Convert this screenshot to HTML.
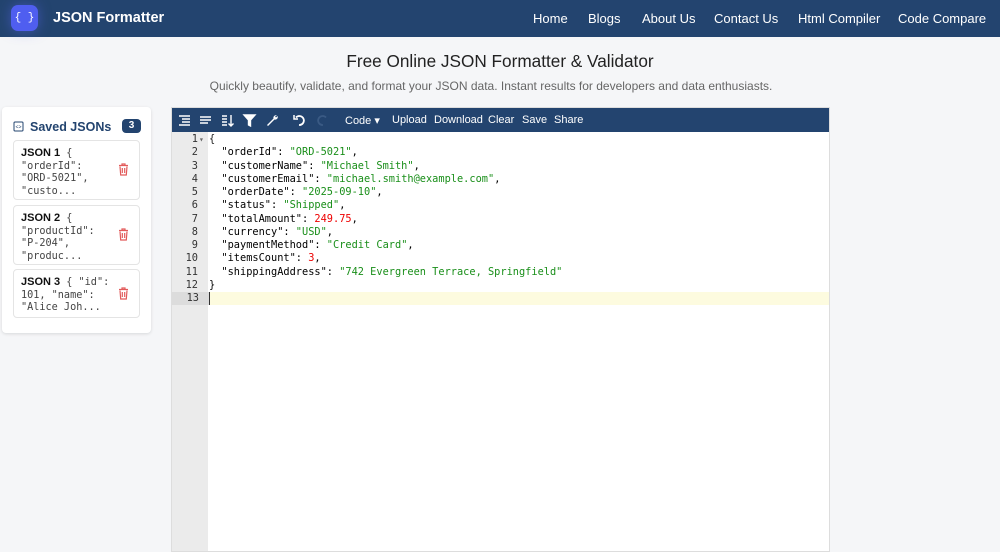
<!DOCTYPE html>
<html><head><style>
*{box-sizing:border-box;margin:0;padding:0}
body{width:1000px;height:552px;overflow:hidden;background:#f5f6f8;font-family:"Liberation Sans",sans-serif;position:relative}
.hdr{position:absolute;left:0;top:0;width:1000px;height:37px;background:#23446f;color:#fff}
.logo{position:absolute;left:11px;top:5px;width:27px;height:26px;border-radius:7px;background:#4f5ef0;box-shadow:0 0 12px rgba(90,100,240,.5);color:#fff;font:11px "Liberation Mono",monospace;text-align:center;line-height:26px}
.brand{position:absolute;left:53px;top:10px;font-size:14.5px;font-weight:bold}
.nav a{position:absolute;top:11px;font-size:13px;color:#fff;text-decoration:none}
h1{position:absolute;left:0;width:1000px;top:51px;text-align:center;font-size:17.2px;font-weight:normal;color:#222}
.sub{position:absolute;left:0;width:982px;top:79px;text-align:center;font-size:12px;color:#666}
.side{position:absolute;left:2px;top:107px;width:149px;height:226px;background:#fff;border-radius:4px;box-shadow:0 1px 3px rgba(0,0,0,.12)}
.side h3{position:absolute;left:28px;top:13px;font-size:12.5px;color:#23446f}
.badge{position:absolute;left:120px;top:12px;width:19px;height:14px;border-radius:4px;background:#23446f;color:#fff;font-size:10px;font-weight:bold;text-align:center;line-height:14px}
.card{position:absolute;left:11px;width:127px;border:1px solid #e4e4e4;border-radius:4px;font:10.2px/12.5px "DejaVu Sans Mono",monospace;color:#444;padding:6px 0 0 7px}
.card b{font-family:"Liberation Sans",sans-serif;color:#111;font-size:11px}
.trash{position:absolute;right:10px;top:50%;margin-top:-7px}
.ed{position:absolute;left:171px;top:107px;width:659px;height:445px;background:#fff;border:1px solid #ddd}
.tb{height:24px;background:#23446f;color:#fff;font-size:11px;position:relative}
.tb span{position:absolute;top:6px}
.gut{position:absolute;left:0;top:24px;width:36px;bottom:0;background:#ebebeb}
.code{position:absolute;left:0;top:25px;width:657px;font:10.3px/13.25px "DejaVu Sans Mono",monospace;color:#000}
.ln{display:flex;height:13.25px;white-space:pre}
.n{width:27px;text-align:right;padding-right:1px;color:#333}
.f{width:10px;font-size:8px;color:#666}
.s{color:#1a8f1a}.k{color:#222}.num{color:#e00}
.act{background:#fdfbdf}
.act .n{background:#dcdcdc}
</style></head><body>
<div class="hdr"><div class="logo">{ }</div><div class="brand">JSON Formatter</div>
<div class="nav"><a style="left:533px">Home</a><a style="left:588px">Blogs</a><a style="left:642px">About Us</a><a style="left:714px">Contact Us</a><a style="left:798px">Html Compiler</a><a style="left:898px">Code Compare</a></div></div>
<h1>Free Online JSON Formatter &amp; Validator</h1>
<div class="sub">Quickly beautify, validate, and format your JSON data. Instant results for developers and data enthusiasts.</div>
<div class="side">
<svg style="position:absolute;left:11px;top:14px" width="11" height="11" viewBox="0 0 11 11"><rect x="1" y="1" width="9" height="9" rx="1" fill="none" stroke="#23446f" stroke-width="1"/><text x="5.5" y="7.5" font-size="5" text-anchor="middle" fill="#23446f" font-family="Liberation Mono">&lt;&gt;</text></svg>
<h3>Saved JSONs</h3><div class="badge">3</div>
<div class="card" style="top:33px;height:60px"><b>JSON 1</b>  {<br>"orderId":<br>"ORD-5021",<br>"custo...<svg class="trash" width="11" height="13" viewBox="0 0 11 13"><path d="M1 2.5h9M4 2.5V1h3v1.5M2 3.5l.7 8.5h5.6l.7-8.5M4.3 5v5M6.7 5v5" stroke="#e25a5a" stroke-width="1.2" fill="none"/></svg></div>
<div class="card" style="top:98px;height:60px"><b>JSON 2</b>  {<br>"productId":<br>"P-204",<br>"produc...<svg class="trash" width="11" height="13" viewBox="0 0 11 13"><path d="M1 2.5h9M4 2.5V1h3v1.5M2 3.5l.7 8.5h5.6l.7-8.5M4.3 5v5M6.7 5v5" stroke="#e25a5a" stroke-width="1.2" fill="none"/></svg></div>
<div class="card" style="top:162px;height:49px"><b>JSON 3</b>  { "id":<br>101, "name":<br>"Alice Joh...<svg class="trash" width="11" height="13" viewBox="0 0 11 13"><path d="M1 2.5h9M4 2.5V1h3v1.5M2 3.5l.7 8.5h5.6l.7-8.5M4.3 5v5M6.7 5v5" stroke="#e25a5a" stroke-width="1.2" fill="none"/></svg></div>
</div>
<div class="ed">
<div class="tb">
<svg style="position:absolute;left:6px;top:6px" width="80" height="13" viewBox="0 0 80 13" stroke="#fff" stroke-width="1.4" fill="none"><path d="M1 2h11M4 5h8M4 8h8M1 11h11"/><path d="M22 3h11M22 6h11M22 9h8"/><path d="M44 2h5M44 5h5M44 8h5M44 11h5M53 1v11M50.5 9.5l2.5 2.5 2.5-2.5"/><path d="M66 1h11l-4.5 5v6l-2-1V6z" fill="#fff"/></svg>
<svg style="position:absolute;left:93px;top:5px" width="14" height="14" viewBox="0 0 14 14"><path d="M12 2.5a2.5 2.5 0 0 0-3.5 3L2 12l1 1 6.5-6.5a2.5 2.5 0 0 0 3-3.5l-1.5 1.5-1-1z" fill="#fff"/></svg>
<svg style="position:absolute;left:120px;top:5px" width="14" height="14" viewBox="0 0 14 14" fill="none" stroke="#fff" stroke-width="1.8"><path d="M4 4.5A4.5 4.5 0 1 1 7 12"/><path d="M2 2v4h4" stroke-width="1.5"/></svg>
<svg style="position:absolute;left:144px;top:5px" width="14" height="14" viewBox="0 0 14 14" fill="none" stroke="#3a5a84" stroke-width="1.8"><path d="M10 4.5A4.5 4.5 0 1 0 7 12"/></svg>
<span style="left:173px">Code ▾</span><span style="left:220px">Upload</span><span style="left:262px">Download</span><span style="left:316px">Clear</span><span style="left:350px">Save</span><span style="left:382px">Share</span>
</div>
<div class="gut"></div>
<div class="code">
<div class="ln"><span class="n">1</span><span class="f">▾</span><span class="k">{</span></div>
<div class="ln"><span class="n">2</span><span class="f"></span>  "orderId": <span class="s">"ORD-5021"</span>,</div>
<div class="ln"><span class="n">3</span><span class="f"></span>  "customerName": <span class="s">"Michael Smith"</span>,</div>
<div class="ln"><span class="n">4</span><span class="f"></span>  "customerEmail": <span class="s">"michael.smith@example.com"</span>,</div>
<div class="ln"><span class="n">5</span><span class="f"></span>  "orderDate": <span class="s">"2025-09-10"</span>,</div>
<div class="ln"><span class="n">6</span><span class="f"></span>  "status": <span class="s">"Shipped"</span>,</div>
<div class="ln"><span class="n">7</span><span class="f"></span>  "totalAmount": <span class="num">249.75</span>,</div>
<div class="ln"><span class="n">8</span><span class="f"></span>  "currency": <span class="s">"USD"</span>,</div>
<div class="ln"><span class="n">9</span><span class="f"></span>  "paymentMethod": <span class="s">"Credit Card"</span>,</div>
<div class="ln"><span class="n">10</span><span class="f"></span>  "itemsCount": <span class="num">3</span>,</div>
<div class="ln"><span class="n">11</span><span class="f"></span>  "shippingAddress": <span class="s">"742 Evergreen Terrace, Springfield"</span></div>
<div class="ln"><span class="n">12</span><span class="f"></span>}</div>
<div class="ln act"><span class="n" style="width:37px;padding-right:10px">13</span><span style="border-left:1px solid #333"></span></div>
</div>
</div>
</body></html>
